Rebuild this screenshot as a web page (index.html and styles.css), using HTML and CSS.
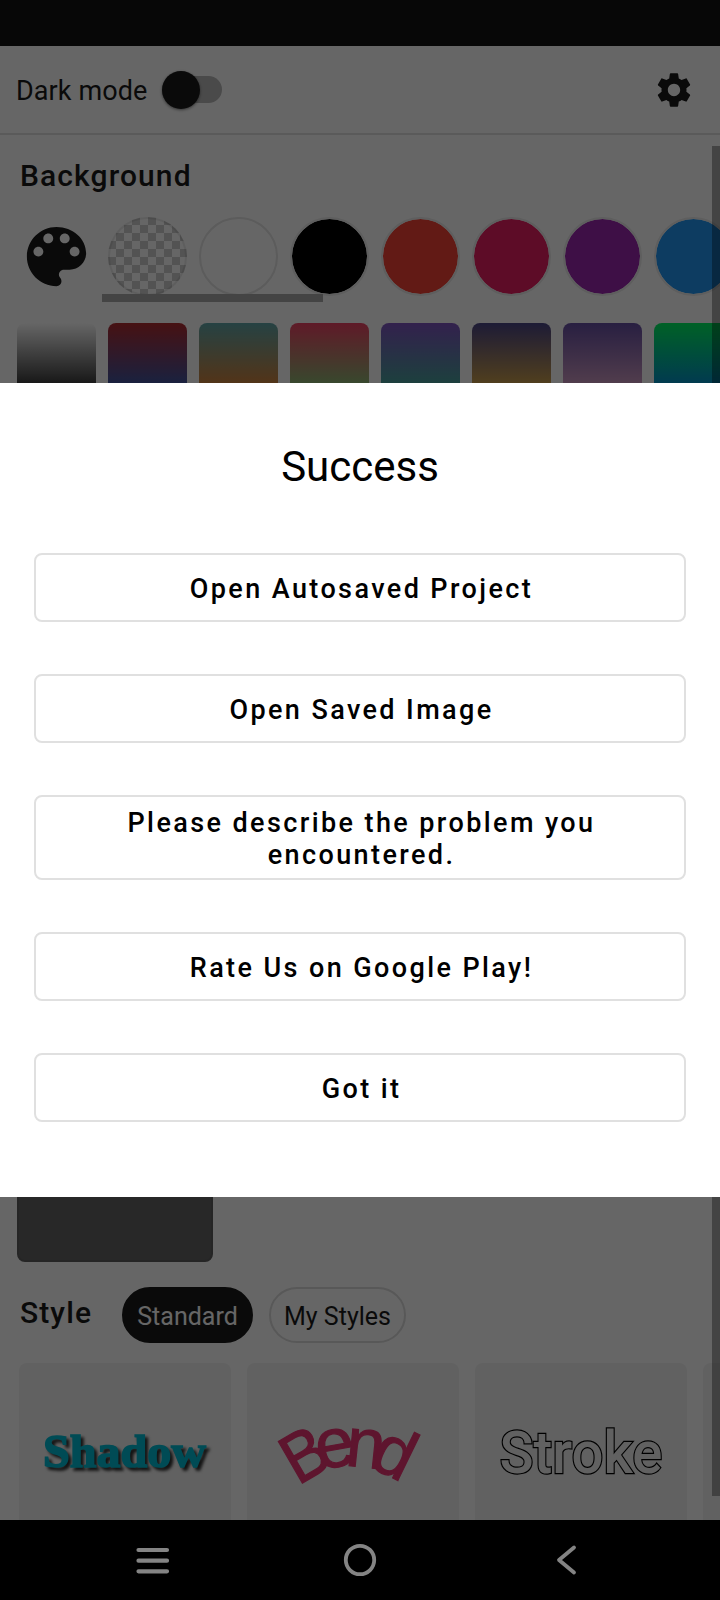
FILE: index.html
```html
<!DOCTYPE html>
<html lang="en">
<head>
<meta charset="utf-8">
<title>Success</title>
<link rel="stylesheet" href="styles.css">
</head>
<body>
<div class="phone">
  <div class="statusbar"></div>
  <header class="toolbar">
    <span class="mode-label">Dark mode</span>
    <span class="switch"><span class="thumb"></span></span>
    <svg class="gear" viewBox="0 0 24 24"><path d="M19.43 12.98c.04-.32.07-.64.07-.98s-.03-.66-.07-.98l2.11-1.65c.19-.15.24-.42.12-.64l-2-3.46c-.12-.22-.39-.3-.61-.22l-2.49 1c-.52-.4-1.08-.73-1.69-.98l-.38-2.65C14.46 2.18 14.25 2 14 2h-4c-.25 0-.46.18-.49.42l-.38 2.65c-.61.25-1.17.59-1.69.98l-2.49-1c-.23-.09-.49 0-.61.22l-2 3.46c-.13.22-.07.49.12.64l2.11 1.65c-.04.32-.07.65-.07.98s.03.66.07.98l-2.11 1.65c-.19.15-.24.42-.12.64l2 3.46c.12.22.39.3.61.22l2.49-1c.52.4 1.08.73 1.69.98l.38 2.65c.03.24.24.42.49.42h4c.25 0 .46-.18.49-.42l.38-2.65c.61-.25 1.17-.59 1.69-.98l2.49 1c.23.09.49 0 .61-.22l2-3.46c.12-.22.07-.49-.12-.64l-2.11-1.65zM12 15.7c-2.04 0-3.7-1.66-3.7-3.7s1.66-3.7 3.7-3.7 3.7 1.66 3.7 3.7-1.66 3.7-3.7 3.7z"/></svg>
  </header>
  <main class="content">
    <h2 class="heading">Background</h2>
    <div class="swatches">
      <svg class="palette" viewBox="0 0 24 24"><path d="M12 3c-4.97 0-9 4.03-9 9s4.03 9 9 9c.83 0 1.5-.67 1.5-1.5 0-.39-.15-.74-.39-1.01-.23-.26-.38-.61-.38-.99 0-.83.67-1.5 1.5-1.5H16c2.76 0 5-2.24 5-5 0-4.42-4.03-8-9-8zm-5.5 9c-.83 0-1.5-.67-1.5-1.5S5.67 9 6.5 9 8 9.67 8 10.5 7.33 12 6.5 12zm3-4C8.67 8 8 7.33 8 6.5S8.67 5 9.5 5s1.5.67 1.5 1.5S10.33 8 9.5 8zm5 0c-.83 0-1.5-.67-1.5-1.5S13.67 5 14.5 5s1.5.67 1.5 1.5S15.33 8 14.5 8zm3 4c-.83 0-1.5-.67-1.5-1.5S16.67 9 17.5 9s1.5.67 1.5 1.5-.67 1.5-1.5 1.5z"/></svg>
      <span class="swatch checker"></span>
      <span class="swatch white"></span>
      <span class="swatch black"></span>
      <span class="swatch red"></span>
      <span class="swatch pink"></span>
      <span class="swatch purple"></span>
      <span class="swatch blue"></span>
      <span class="scroll-x"></span>
    </div>
    <div class="gradients">
      <span class="tile g1"></span>
      <span class="tile g2"></span>
      <span class="tile g3"></span>
      <span class="tile g4"></span>
      <span class="tile g5"></span>
      <span class="tile g6"></span>
      <span class="tile g7"></span>
      <span class="tile g8"></span>
    </div>
    <div class="preview"></div>
    <div class="style-row">
      <h2 class="style-title">Style</h2>
      <span class="chip chip-on">Standard</span>
      <span class="chip">My Styles</span>
    </div>
    <div class="cards">
      <svg class="card" viewBox="0 0 212 157"><text class="t-shadow" x="24" y="104" textLength="163" lengthAdjust="spacingAndGlyphs">Shadow</text></svg>
      <svg class="card" viewBox="0 0 212 157">
        <g class="t-bend">
          <text transform="translate(50.8 122.7) rotate(-30) scale(.93 1)">B</text>
          <text class="mid" transform="translate(91.5 103.5) rotate(-10)">e</text>
          <text class="mid" transform="translate(116.7 104.3) rotate(6)">n</text>
          <text class="end" transform="translate(155 119.5) rotate(26)">d</text>
        </g>
      </svg>
      <svg class="card" viewBox="0 0 212 157"><text class="t-stroke" x="24.5" y="109.5" textLength="163" lengthAdjust="spacingAndGlyphs">Stroke</text></svg>
      <svg class="card" viewBox="0 0 212 157"></svg>
    </div>
  </main>
  <div class="scroll-y"></div>
  <div class="scrim"></div>
  <nav class="navbar">
    <svg class="nav-icons" viewBox="0 0 720 80">
      <path class="bars" d="M138.500 30h28.500M138.500 40.700h28.500M138.500 51.300h28.500"/>
      <circle cx="360" cy="40" r="14.200"/>
      <path d="M574 27.500L559 40l15 12.500"/>
    </svg>
  </nav>
  <section class="dialog">
    <h1 class="title">Success</h1>
    <button class="btn">Open Autosaved Project</button>
    <button class="btn">Open Saved Image</button>
    <button class="btn tall">Please describe the problem you encountered.</button>
    <button class="btn">Rate Us on Google Play!</button>
    <button class="btn">Got it</button>
  </section>
</div>
</body>
</html>
```
FILE: styles.css
```css
* { box-sizing: border-box; }
body { margin: 0; font-family: Roboto, "Liberation Sans", sans-serif; color: #1a1a1a; }
.phone { position: relative; width: 720px; height: 1600px; overflow: hidden; background: #fff; display: flex; flex-direction: column; }
.statusbar { height: 46px; background: #121212; flex: none; }

.toolbar { height: 89px; flex: none; display: flex; align-items: center; padding: 0 26px 0 16px; border-bottom: 2px solid #e2e2e2; }
.mode-label { font-size: 27px; line-height: 32px; letter-spacing: 0.1px; width: 145.5px; padding-top: 2px; white-space: nowrap; }
.switch { width: 60px; height: 27px; border-radius: 14px; background: #b9b9b9; display: flex; align-items: center; }
.thumb { width: 38px; height: 38px; flex: none; border-radius: 50%; background: #1a1a1a; box-shadow: 0 1px 3px rgba(0, 0, 0, 0.5); }
.gear { width: 40px; height: 40px; margin-left: auto; fill: #1a1a1a; }

.content { height: 1385px; flex: none; overflow: hidden; display: flex; flex-direction: column; }
.heading, .style-title { margin: 0; font-weight: 500; font-size: 30px; line-height: 36px; letter-spacing: 1.1px; }
.heading { padding: 23px 0 0 20px; }
.swatches { position: relative; display: flex; gap: 12px; margin-top: 23px; padding-left: 17px; }
.palette { width: 79px; height: 79px; flex: none; fill: #1a1a1a; }
.swatch { width: 79px; height: 79px; flex: none; border-radius: 50%; border: 2px solid #ebebeb; }
.checker { background: conic-gradient(#d0d0d0 25%, #fff 0 50%, #d0d0d0 0 75%, #fff 0) border-box 0 0 / 16px 16px; border-color: rgba(0, 0, 0, 0.08); }
.white { border-color: #e5e5e5; }
.black { background: #000 padding-box; }
.red { background: #f44336 padding-box; }
.pink { background: #e91e63 padding-box; }
.purple { background: #9c27b0 padding-box; }
.blue { background: #2196f3 padding-box; }
.scroll-x { position: absolute; left: 102px; bottom: -6px; width: 221px; height: 8px; background: #ababab; }

.gradients { display: flex; gap: 12px; margin-top: 27px; padding-left: 17px; }
.tile { width: 79px; height: 79px; flex: none; border-radius: 8px; }
.g1 { background: linear-gradient(#fff, #000); }
.g2 { background: linear-gradient(#b02c30, #1f60c0); }
.g3 { background: linear-gradient(#5fa5a8, #f0781c); }
.g4 { background: linear-gradient(#ed4264, #6fd878); }
.g5 { background: linear-gradient(#7f53c0, #38b890); }
.g6 { background: linear-gradient(#4a4586, #f0b93a); }
.g7 { background: linear-gradient(#654ea3, #eaafc8); }
.g8 { background: linear-gradient(#00f260, #0575e6); }

.preview { flex: none; width: 196px; height: 196px; margin: 664px 0 0 17px; border-radius: 8px; background: #656565; border: 2px solid #5c5c5c; }
.style-row { display: flex; height: 56px; margin-top: 25px; padding-left: 20px; }
.style-title { width: 102px; padding-top: 8px; }
.chip { display: flex; align-items: center; height: 56px; margin-right: 16px; padding: 3px 0 0; width: 137px; justify-content: center; border-radius: 28px; border: 2px solid #dcdcdc; font-size: 25px; white-space: nowrap; }
.chip-on { width: 131px; background: #1a1a1a; border-color: #1a1a1a; color: #fff; }
.cards { display: flex; gap: 16px; margin-top: 20px; padding-left: 19px; }
.card { width: 212px; height: 157px; flex: none; border-radius: 8px 8px 0 0; background: #f2f2f2; }
.t-shadow { font: bold 47px "Liberation Serif", serif; fill: #00bcd4; stroke: #00bcd4; stroke-width: 1.6px; filter: drop-shadow(3px 3px 1.5px rgba(0, 0, 0, 0.8)); }
.t-bend { font: 70px "Liberation Sans", sans-serif; fill: #ec3574; stroke: #ec3574; stroke-width: 1.2px; }
.mid { text-anchor: middle; }
.end { text-anchor: end; }
.t-stroke { font: 500 59px Roboto, sans-serif; fill: #f2f2f2; stroke: #000; stroke-width: 2.4px; paint-order: stroke; }

.scroll-y { position: absolute; right: 0; top: 146px; width: 8px; height: 1350px; background: rgba(0, 0, 0, 0.33); }
.scrim { position: absolute; inset: 0; background: rgba(0, 0, 0, 0.6); }
.navbar { position: relative; height: 80px; flex: none; background: #000; }
.nav-icons { display: block; width: 720px; height: 80px; fill: none; stroke: #848484; stroke-width: 3.8; stroke-linecap: round; stroke-linejoin: round; }
.bars { stroke-width: 4.2; }

.dialog { position: absolute; left: 0; top: 383px; width: 720px; height: 814px; padding: 0 34px; background: #fff; display: flex; flex-direction: column; gap: 52px; color: #000; }
.title { margin: 0; height: 118px; padding-top: 59px; font-weight: 400; font-size: 42px; line-height: 50px; text-align: center; }
.btn { height: 69px; flex: none; padding: 2px 56px 0 59px; border: 2px solid #e0e0e0; border-radius: 8px; background: #fff; color: #000; font: 500 27px/32px Roboto, sans-serif; letter-spacing: 2.4px; text-align: center; }
.tall { height: 85px; }
```
